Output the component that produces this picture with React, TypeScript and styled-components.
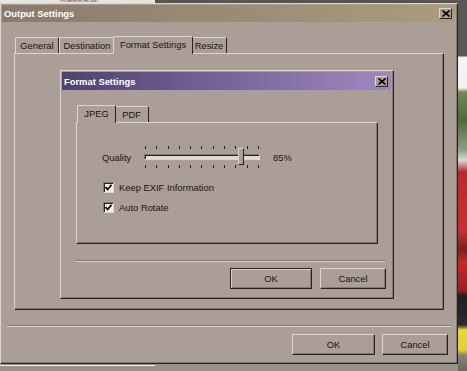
import React from 'react';
import styled, { createGlobalStyle } from 'styled-components';

const FACE = '#ab9e96';
const LIGHT = '#ddd4cc';
const SHADE = '#857870';
const DARK = '#2a2220';

const GlobalStyle = createGlobalStyle`
  html, body {
    margin: 0;
    padding: 0;
    background: ${FACE};
  }
  body {
    font-family: "Liberation Sans", Arial, sans-serif;
    font-size: 9.4px;
    color: #1a1412;
  }
`;

const Page = styled.div`
  width: 467px;
  height: 371px;
  display: flex;
  overflow: hidden;
`;

const Desk = styled.div`
  width: 458px;
  display: flex;
  flex-direction: column;
`;

const TopStrip = styled.div`
  height: 3px;
  display: flex;
  overflow: hidden;
`;

const TopText = styled.div`
  width: 155px;
  box-sizing: border-box;
  background: #e8e4e0;
  font-size: 3px;
  line-height: 3px;
  padding-left: 60px;
  color: #222;
  white-space: nowrap;
`;

const TopDark = styled.div`
  flex: 1;
  background: #575452;
`;

const BottomStrip = styled.div`
  flex: 1;
  display: flex;
  flex-direction: column;
  background: #9a908a;
`;

const BottomLine = styled.div`
  margin-top: 1px;
  width: 155px;
  height: 1px;
  background: #f0ece8;
`;

const Photo = styled.div`
  width: 9px;
  background: linear-gradient(
    to bottom,
    #5a5856 0px,
    #5a5856 56px,
    #f4f4f2 57px,
    #f0f0ee 88px,
    #6f8a58 92px,
    #4e6a3c 120px,
    #8ea080 150px,
    #d8dad6 160px,
    #b82a2a 172px,
    #c83030 230px,
    #7a2020 250px,
    #c42828 262px,
    #a02020 290px,
    #202020 296px,
    #2a2a30 325px,
    #e8d840 330px,
    #e0d030 350px,
    #8a8478 355px,
    #6c6660 371px
  );
`;

const Window = styled.div<{ $width: number; $height: number }>`
  position: relative;
  width: ${(p) => p.$width}px;
  height: ${(p) => p.$height}px;
  flex-shrink: 0;
  box-sizing: border-box;
  background: ${FACE};
  border-top: 1px solid ${LIGHT};
  border-left: 1px solid ${LIGHT};
  border-right: 1px solid ${DARK};
  border-bottom: 1px solid ${DARK};
  box-shadow: inset -1px -1px 0 ${SHADE};
  padding: 1px 2px 2px 1px;
  display: flex;
  flex-direction: column;
`;

const TitleBar = styled.div<{ $from: string; $to: string; $height: number }>`
  height: ${(p) => p.$height}px;
  display: flex;
  align-items: center;
  justify-content: space-between;
  padding: 0 3px 0 2px;
  background: linear-gradient(to right, ${(p) => p.$from}, ${(p) => p.$to});
  color: #fff;
  font-weight: bold;
  font-size: 9.4px;
`;

const CloseBox = styled.div`
  width: 13px;
  height: 11px;
  box-sizing: border-box;
  background: ${FACE};
  border-top: 1px solid ${LIGHT};
  border-left: 1px solid ${LIGHT};
  border-right: 1px solid ${DARK};
  border-bottom: 1px solid ${DARK};
  display: flex;
  align-items: center;
  justify-content: center;
`;

const Body = styled.div<{ $pad: string }>`
  flex: 1;
  display: flex;
  flex-direction: column;
  padding: ${(p) => p.$pad};
`;

const TabRow = styled.div<{ $indent: number }>`
  display: flex;
  align-items: flex-end;
  height: 17px;
  padding-left: ${(p) => p.$indent}px;
`;

const Tab = styled.div<{ $active?: boolean; $width: number }>`
  width: ${(p) => p.$width}px;
  height: ${(p) => (p.$active ? 18 : 16)}px;
  box-sizing: border-box;
  display: flex;
  align-items: center;
  justify-content: center;
  border-top: 1px solid ${LIGHT};
  border-left: 1px solid ${LIGHT};
  border-right: 1px solid ${DARK};
  border-radius: 2px 2px 0 0;
  background: ${FACE};
  position: relative;
  margin: ${(p) => (p.$active ? '0 -2px -1px -2px' : '0')};
  z-index: ${(p) => (p.$active ? 2 : 1)};
  padding-bottom: ${(p) => (p.$active ? 2 : 0)}px;
`;

const Panel = styled.div<{ $width: number; $height: number }>`
  width: ${(p) => p.$width}px;
  height: ${(p) => p.$height}px;
  box-sizing: border-box;
  border-top: 1px solid ${LIGHT};
  border-left: 1px solid ${LIGHT};
  border-right: 1px solid ${DARK};
  border-bottom: 1px solid ${DARK};
  box-shadow: inset -1px -1px 0 ${SHADE};
  position: relative;
  z-index: 1;
`;

const Separator = styled.div<{ $top: number; $left: number; $width: number }>`
  margin: ${(p) => p.$top}px 0 0 ${(p) => p.$left}px;
  width: ${(p) => p.$width}px;
  height: 1px;
  background: ${SHADE};
  border-bottom: 1px solid ${LIGHT};
`;

const ButtonRow = styled.div<{ $top: number; $right: number; $gap: number }>`
  display: flex;
  justify-content: flex-end;
  gap: ${(p) => p.$gap}px;
  margin-top: ${(p) => p.$top}px;
  padding-right: ${(p) => p.$right}px;
`;

const Button = styled.div<{ $width: number; $default?: boolean }>`
  width: ${(p) => p.$width}px;
  height: 21px;
  box-sizing: border-box;
  display: flex;
  align-items: center;
  justify-content: center;
  background: ${FACE};
  border-top: 1px solid ${(p) => (p.$default ? DARK : LIGHT)};
  border-left: 1px solid ${(p) => (p.$default ? DARK : LIGHT)};
  border-right: 1px solid ${DARK};
  border-bottom: 1px solid ${DARK};
  box-shadow: ${(p) =>
    p.$default
      ? `inset 1px 1px 0 ${LIGHT}, inset -1px -1px 0 ${SHADE}`
      : `inset -1px -1px 0 ${SHADE}`};
`;

const Dialog = styled(Window)`
  position: absolute;
  left: 59px;
  top: 66px;
  z-index: 3;
`;

const SettingsBody = styled.div`
  display: flex;
  flex-direction: column;
  padding: 23px 0 0 25px;
  gap: 8px;
`;

const QualityRow = styled.div`
  display: flex;
  align-items: center;
  height: 22px;
  margin-bottom: 5px;
`;

const QualityLabel = styled.span`
  width: 42px;
`;

const Slider = styled.div`
  position: relative;
  width: 116px;
  height: 22px;
  display: flex;
  flex-direction: column;
  justify-content: space-between;
`;

const Ticks = styled.div`
  display: flex;
  justify-content: space-between;
  padding: 0 1px;
  height: 3px;
`;

const Tick = styled.span`
  width: 1px;
  height: 3px;
  background: #2a2220;
`;

const Track = styled.div`
  height: 6px;
  box-sizing: border-box;
  background: #e2dad2;
  border-top: 1px solid ${SHADE};
  border-left: 1px solid ${SHADE};
  border-right: 1px solid ${LIGHT};
  border-bottom: 1px solid ${LIGHT};
  box-shadow: inset 1px 1px 0 ${DARK};
`;

const Thumb = styled.div`
  position: absolute;
  top: 2px;
  width: 6px;
  height: 17px;
  box-sizing: border-box;
  background: ${FACE};
  border-top: 1px solid ${LIGHT};
  border-left: 1px solid ${LIGHT};
  border-right: 1px solid ${DARK};
  border-bottom: 1px solid ${DARK};
`;

const Percent = styled.span`
  margin-left: 13px;
`;

const CheckRow = styled.label`
  display: flex;
  align-items: center;
  gap: 5px;
  height: 12px;
  padding-left: 1px;
`;

const Box = styled.span`
  width: 11px;
  height: 11px;
  box-sizing: border-box;
  background: #f2eee8;
  border-top: 1px solid ${SHADE};
  border-left: 1px solid ${SHADE};
  border-right: 1px solid ${LIGHT};
  border-bottom: 1px solid ${LIGHT};
  box-shadow: inset 1px 1px 0 ${DARK};
  display: flex;
  align-items: center;
  justify-content: center;
`;

const CloseIcon = () => (
  <svg width="8" height="7" viewBox="0 0 8 7">
    <path d="M0.5 0.5 L7.5 6.5 M7.5 0.5 L0.5 6.5" stroke="#000" strokeWidth="1.6" />
  </svg>
);

const Check = () => (
  <svg width="7" height="7" viewBox="0 0 7 7">
    <path d="M0.5 3 L2.6 5.4 L6.5 0.8" stroke="#000" strokeWidth="1.6" fill="none" />
  </svg>
);

const Checkbox = ({ label }: { label: string }) => (
  <CheckRow>
    <Box>
      <Check />
    </Box>
    {label}
  </CheckRow>
);

const QualitySlider = ({ value }: { value: number }) => {
  const ticks = Array.from({ length: 11 });
  return (
    <Slider>
      <Ticks>
        {ticks.map((_, i) => (
          <Tick key={i} />
        ))}
      </Ticks>
      <Track />
      <Ticks>
        {ticks.map((_, i) => (
          <Tick key={i} />
        ))}
      </Ticks>
      <Thumb style={{ left: `${(value / 100) * 110}px` }} />
    </Slider>
  );
};

const FormatDialog = () => (
  <Dialog $width={334} $height={229}>
    <TitleBar $from="#4e4270" $to="#a088c0" $height={18}>
      <span>Format Settings</span>
      <CloseBox>
        <CloseIcon />
      </CloseBox>
    </TitleBar>
    <Body $pad="15px 0 0 14px">
      <TabRow $indent={3}>
        <Tab $active $width={39}>
          JPEG
        </Tab>
        <Tab $width={35}>PDF</Tab>
      </TabRow>
      <Panel $width={302} $height={122}>
        <SettingsBody>
          <QualityRow>
            <QualityLabel>Quality</QualityLabel>
            <QualitySlider value={85} />
            <Percent>85%</Percent>
          </QualityRow>
          <Checkbox label="Keep EXIF Information" />
          <Checkbox label="Auto Rotate" />
        </SettingsBody>
      </Panel>
      <Separator $top={16} $left={0} $width={309} />
      <ButtonRow $top={6} $right={5} $gap={8}>
        <Button $width={82} $default>
          OK
        </Button>
        <Button $width={66}>Cancel</Button>
      </ButtonRow>
    </Body>
  </Dialog>
);

export default function App() {
  return (
    <>
      <GlobalStyle />
      <Page>
        <Desk>
          <TopStrip>
            <TopText>s Pu liberate the UHS 2006 i</TopText>
            <TopDark />
          </TopStrip>
          <Window $width={458} $height={361}>
            <TitleBar $from="#8a7a6e" $to="#ac9c7c" $height={17}>
              <span>Output Settings</span>
              <CloseBox>
                <CloseIcon />
              </CloseBox>
            </TitleBar>
            <Body $pad="14px 0 0 12px">
              <TabRow $indent={1}>
                <Tab $width={44}>General</Tab>
                <Tab $width={56}>Destination</Tab>
                <Tab $active $width={80}>
                  Format Settings
                </Tab>
                <Tab $width={36}>Resize</Tab>
              </TabRow>
              <Panel $width={430} $height={257} />
              <Separator $top={15} $left={-7} $width={444} />
              <ButtonRow $top={7} $right={7} $gap={7}>
                <Button $width={83}>OK</Button>
                <Button $width={66}>Cancel</Button>
              </ButtonRow>
            </Body>
            <FormatDialog />
          </Window>
          <BottomStrip>
            <BottomLine />
          </BottomStrip>
        </Desk>
        <Photo />
      </Page>
    </>
  );
}
